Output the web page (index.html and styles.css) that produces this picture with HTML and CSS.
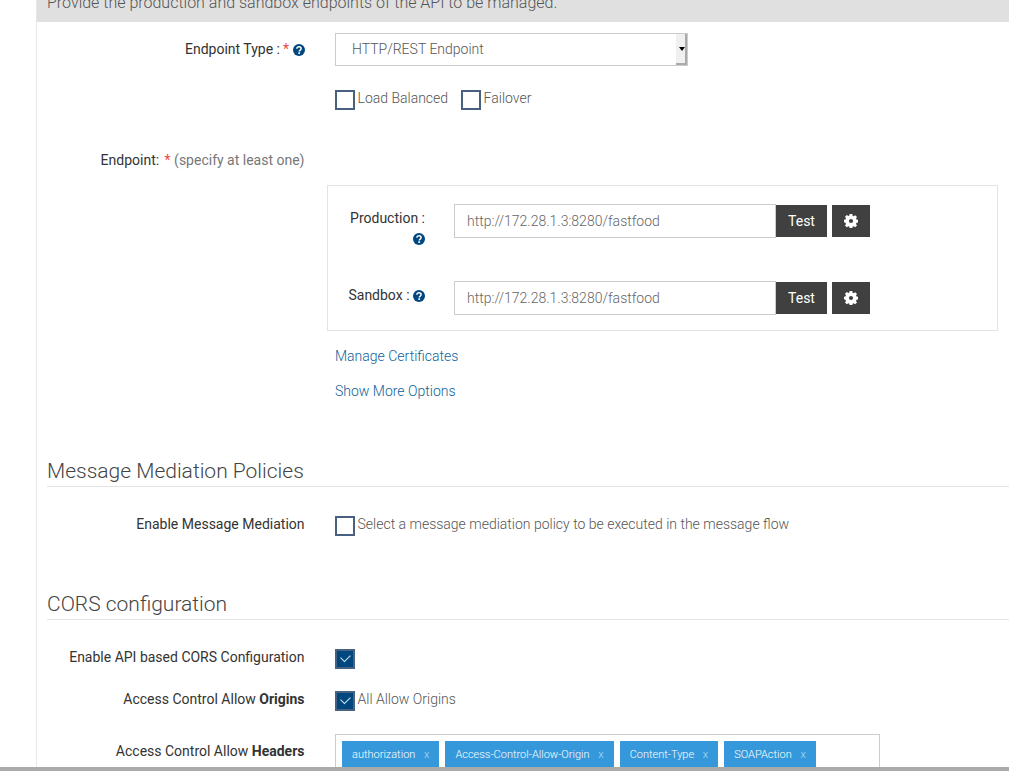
FILE: index.html
```html
<!DOCTYPE html>
<html lang="en">
<head>
  <meta charset="utf-8">
  <meta name="viewport" content="width=device-width, initial-scale=1">
  <title>API Implement</title>
  <link rel="stylesheet" href="styles.css">
</head>
<body>
  <svg class="defs" width="0" height="0" aria-hidden="true">
    <symbol id="icon-help" viewBox="0 0 12 12">
      <circle cx="6" cy="6" r="6" fill="#00467f"/>
      <path d="M3.9 4.7C3.9 3.5 4.8 2.8 6 2.8s2.1.7 2.1 1.8c0 .9-.5 1.3-1.1 1.7-.5.3-.7.5-.7 1v.3" fill="none" stroke="#fff" stroke-width="1.5"/>
      <rect x="5.3" y="8.3" width="1.8" height="1.6" fill="#fff"/>
    </symbol>
    <symbol id="icon-gear" viewBox="0 0 14 14">
      <path fill-rule="evenodd" fill="#fff" d="M5.7 0h2.6l.3 1.7 1.1.5 1.5-1 1.8 1.8-1 1.5.5 1.1 1.7.3v2.6l-1.7.3-.5 1.1 1 1.5-1.8 1.8-1.5-1-1.1.5-.3 1.7H5.7l-.3-1.7-1.1-.5-1.5 1-1.8-1.8 1-1.5-.5-1.1L-.2 8.3V5.7l1.7-.3.5-1.1-1-1.5L2.800 1l1.5 1 1.1-.5zM7 4.900a2.100 2.100 0 1 0 0 4.200 2.100 2.100 0 0 0 0-4.200z"/>
    </symbol>
  </svg>

  <main class="content">
    <p class="banner">Provide the production and sandbox endpoints of the API to be managed.</p>

    <div class="row row-type">
      <div class="label">Endpoint Type :<span class="req req-type">*</span> <svg class="help"><use href="#icon-help"/></svg></div>
      <div class="fake-select">
        <span class="select-text">HTTP/REST Endpoint</span>
        <span class="select-arrow"></span>
      </div>
    </div>

    <div class="row row-lb">
      <div></div>
      <div class="checks">
        <label class="check"><span class="box"></span>Load Balanced</label>
        <label class="check"><span class="box"></span>Failover</label>
      </div>
    </div>

    <div class="row row-endpoint">
      <div class="label">Endpoint: <span class="req req-gap">*</span> <span class="muted">(specify at least one)</span></div>
      <div></div>
    </div>

    <section class="endpoints">
      <div class="ep-row ep-production">
        <div class="ep-label">Production :<br><svg class="help"><use href="#icon-help"/></svg></div>
        <input class="ep-input" type="text" value="http://172.28.1.3:8280/fastfood">
        <button class="btn btn-test">Test</button>
        <button class="btn btn-gear"><svg class="gear"><use href="#icon-gear"/></svg></button>
      </div>
      <div class="ep-row ep-sandbox">
        <div class="ep-label">Sandbox : <svg class="help"><use href="#icon-help"/></svg></div>
        <input class="ep-input" type="text" value="http://172.28.1.3:8280/fastfood">
        <button class="btn btn-test">Test</button>
        <button class="btn btn-gear"><svg class="gear"><use href="#icon-gear"/></svg></button>
      </div>
    </section>

    <div class="links">
      <a href="#">Manage Certificates</a>
      <a href="#" class="link-more">Show More Options</a>
    </div>

    <h2 class="section-title title-mediation">Message Mediation Policies</h2>
    <div class="row row-mediation">
      <div class="label">Enable Message Mediation</div>
      <label class="check"><span class="box"></span>Select a message mediation policy to be executed in the message flow</label>
    </div>

    <h2 class="section-title title-cors">CORS configuration</h2>
    <div class="row row-cors">
      <div class="label">Enable API based CORS Configuration</div>
      <label class="check"><span class="box checked"></span></label>
    </div>
    <div class="row row-origins">
      <div class="label">Access Control Allow <b>Origins</b></div>
      <label class="check"><span class="box checked"></span>All Allow Origins</label>
    </div>
    <div class="row row-headers">
      <div class="label">Access Control Allow <b>Headers</b></div>
      <div class="tags">
        <span class="tag">authorization <i>x</i></span>
        <span class="tag">Access-Control-Allow-Origin <i>x</i></span>
        <span class="tag">Content-Type <i>x</i></span>
        <span class="tag">SOAPAction <i>x</i></span>
      </div>
    </div>
  </main>

  <div class="bottom-bar"></div>
</body>
</html>
```

FILE: styles.css
```css
*, *::before, *::after { box-sizing: border-box }

html, body {
  height: 771px;
  overflow: hidden;
}

body {
  margin: 0;
  background: #fff;
  color: #333;
  font: 14px/20px Roboto, sans-serif;
}

.defs { position: absolute; }

.content {
  margin-left: 36px;
  height: 771px;
  border-left: 1px solid #e7e7e7;
  overflow: hidden;
}

.banner {
  margin: 0;
  height: 22px;
  padding-left: 10px;
  background: #e0e0e0;
  color: #555;
  font-size: 16px;
  font-weight: 300;
  line-height: 5px;
}

/* rows */

.row {
  display: grid;
  grid-template-columns: 268px 1fr;
  column-gap: 30px;
  align-items: start;
}

.label {
  padding-right: 0.5px;
  text-align: right;
}

.req { color: #e74c3c; }
.req-type { margin-left: 3px; }
.req-gap { margin-left: 2px; }
.muted { color: #777; }

.help {
  width: 12px;
  height: 12px;
  vertical-align: -2px;
}

.row-type { margin-top: 11px; }
.row-type .label { padding-top: 6px; }

.fake-select {
  display: flex;
  justify-content: space-between;
  align-items: center;
  width: 353px;
  height: 33px;
  padding-left: 16px;
  border: 1px solid #ccc;
  color: #555;
  font-weight: 300;
}

.select-text { margin-bottom: 2px; }

.select-arrow {
  position: relative;
  width: 11px;
  height: 31px;
  background: #f0f0f0;
  border-right: 2px solid #aaa;
  border-bottom: 2px solid #aaa;
}

.select-arrow::after {
  content: '';
  position: absolute;
  left: 3px;
  top: 13px;
  border: 3px solid transparent;
  border-top: 4px solid #000;
  border-bottom: 0;
}

.row-lb { margin-top: 22px; }

.checks {
  display: flex;
  gap: 13px;
}

.check {
  display: flex;
  align-items: flex-start;
  min-height: 20px;
  color: #555;
  font-weight: 300;
}

.box {
  width: 20px;
  height: 20px;
  margin: 2px 2.5px 0 0;
  border: 2px solid #47617f;
  background: #fff;
}

.box.checked {
  position: relative;
  background: #00467f;
}

.box.checked::after {
  content: '';
  position: absolute;
  left: 4px;
  top: 3px;
  width: 9px;
  height: 6px;
  border-left: 1.5px solid #cfe3f2;
  border-bottom: 1.5px solid #cfe3f2;
  transform: rotate(-45deg);
}

.row-endpoint { margin-top: 40px; }

/* endpoint box */

.endpoints {
  width: 671px;
  height: 146px;
  margin: 15px 0 0 290px;
  padding: 18px 0 0 0;
  border: 1px solid #e3e3e3;
}

.ep-row {
  display: flex;
  align-items: flex-start;
}

.ep-sandbox { margin-top: 43px; }

.ep-label {
  width: 97px;
  height: 34px;
  margin-right: 29px;
  padding-top: 4px;
  text-align: right;
}

.ep-input {
  width: 322px;
  height: 34px;
  padding: 0 12px;
  border: 1px solid #ccc;
  border-radius: 0;
  outline: none;
  color: #666;
  font: 300 14px Roboto, sans-serif;
}

.btn {
  height: 32px;
  margin-top: 1px;
  border: none;
  border-radius: 0;
  background: #404040;
  color: #fff;
  font: 14px Roboto, sans-serif;
}

.btn-test { width: 51px; }

.btn-gear {
  display: flex;
  align-items: center;
  justify-content: center;
  width: 38px;
  margin-left: 5px;
}

.gear {
  width: 14px;
  height: 14px;
}

/* links */

.links {
  display: flex;
  flex-direction: column;
  align-items: flex-start;
  margin: 15px 0 0 298px;
  font-weight: 300;
}

.links a {
  color: #0f5f9a;
  text-decoration: none;
}

.link-more { margin-top: 15px; }

/* sections */

.section-title {
  margin: 0 0 0 10px;
  padding-bottom: 1px;
  border-bottom: 1px solid #e3e3e3;
  color: #444;
  font-size: 21px;
  font-weight: 300;
  line-height: 28px;
}

.title-mediation { margin-top: 56px; }
.title-cors { margin-top: 54px; }

.row-mediation { margin-top: 27px; }
.row-cors { margin-top: 27px; }
.row-origins { margin-top: 20px; }
.row-headers { margin-top: 30px; }

.tags {
  display: flex;
  gap: 6px;
  width: 545px;
  height: 60px;
  margin-top: -7px;
  padding: 6px 6px;
  border: 1px solid #ccc;
}

.tag {
  height: 27px;
  padding: 0 10px;
  background: #3498db;
  color: #fff;
  font-size: 11px;
  font-weight: 300;
  line-height: 27px;
}

.tag i {
  margin-left: 6px;
  color: #b8dcf5;
  font-style: normal;
}

.bottom-bar {
  position: fixed;
  left: 0;
  right: 0;
  bottom: 0;
  height: 4px;
  background: #aaa;
}
```
